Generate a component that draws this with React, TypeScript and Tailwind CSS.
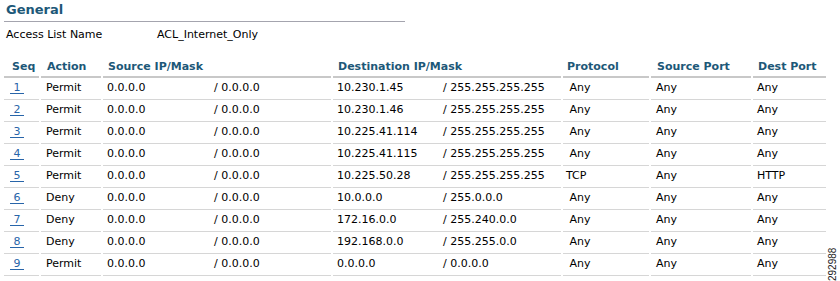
import React from 'react';

const rules = [
  { seq: 1, action: 'Permit', src: '0.0.0.0', srcMask: '0.0.0.0', dst: '10.230.1.45', dstMask: '255.255.255.255', proto: 'Any', srcPort: 'Any', dstPort: 'Any' },
  { seq: 2, action: 'Permit', src: '0.0.0.0', srcMask: '0.0.0.0', dst: '10.230.1.46', dstMask: '255.255.255.255', proto: 'Any', srcPort: 'Any', dstPort: 'Any' },
  { seq: 3, action: 'Permit', src: '0.0.0.0', srcMask: '0.0.0.0', dst: '10.225.41.114', dstMask: '255.255.255.255', proto: 'Any', srcPort: 'Any', dstPort: 'Any' },
  { seq: 4, action: 'Permit', src: '0.0.0.0', srcMask: '0.0.0.0', dst: '10.225.41.115', dstMask: '255.255.255.255', proto: 'Any', srcPort: 'Any', dstPort: 'Any' },
  { seq: 5, action: 'Permit', src: '0.0.0.0', srcMask: '0.0.0.0', dst: '10.225.50.28', dstMask: '255.255.255.255', proto: 'TCP', srcPort: 'Any', dstPort: 'HTTP' },
  { seq: 6, action: 'Deny', src: '0.0.0.0', srcMask: '0.0.0.0', dst: '10.0.0.0', dstMask: '255.0.0.0', proto: 'Any', srcPort: 'Any', dstPort: 'Any' },
  { seq: 7, action: 'Deny', src: '0.0.0.0', srcMask: '0.0.0.0', dst: '172.16.0.0', dstMask: '255.240.0.0', proto: 'Any', srcPort: 'Any', dstPort: 'Any' },
  { seq: 8, action: 'Deny', src: '0.0.0.0', srcMask: '0.0.0.0', dst: '192.168.0.0', dstMask: '255.255.0.0', proto: 'Any', srcPort: 'Any', dstPort: 'Any' },
  { seq: 9, action: 'Permit', src: '0.0.0.0', srcMask: '0.0.0.0', dst: '0.0.0.0', dstMask: '0.0.0.0', proto: 'Any', srcPort: 'Any', dstPort: 'Any' },
];

const headers = [
  { label: 'Seq', pad: 'pl-[8px]' },
  { label: 'Action', pad: 'pl-[6px]' },
  { label: 'Source IP/Mask', pad: 'pl-[5px]' },
  { label: 'Destination IP/Mask', pad: 'pl-[5px]' },
  { label: 'Protocol', pad: 'pl-[4px]' },
  { label: 'Source Port', pad: 'pl-[6px]' },
  { label: 'Dest Port', pad: 'pl-[5px]' },
];

const cell = 'h-[22px] flex items-center border-b border-[#d6d6d6] whitespace-pre';

const App = () => {
  return (
    <div className="relative w-[840px] h-[281px] bg-white text-black text-[11px] font-['DejaVu_Sans','Verdana',sans-serif]">
      <div className="h-[21px] pl-[6px] pt-[1px] text-[13px] font-bold leading-[17px] text-[#1d5878]">General</div>
      <div className="ml-[4px] w-[401px] h-px bg-[#a4a4ae]" />

      <div className="h-[26px] flex items-center">
        <span className="pl-[6px] w-[157px]">Access List Name</span>
        <span>ACL_Internet_Only</span>
      </div>

      <div className="mt-[10px] ml-[4px] grid grid-cols-[35px_60px_228px_228px_86px_100px_73px] gap-x-[2px]">
        {headers.map((h) => (
          <div
            key={h.label}
            className={`h-[20px] flex items-center border-b-2 border-[#c8c8c8] font-bold text-[#1d5878] whitespace-nowrap ${h.pad}`}
          >
            {h.label}
          </div>
        ))}

        {rules.map((r) => (
          <React.Fragment key={r.seq}>
            <div className={`${cell} pl-[6px]`}>
              <a href="#" className="text-[#2865a9] underline underline-offset-2">{`\u00a0${r.seq}\u00a0`}</a>
            </div>
            <div className={`${cell} pl-[5px]`}>{r.action}</div>
            <div className={cell}>
              <span className="w-[107px] pl-[4px]">{r.src}</span>
              <span className="pl-[4px]">/ {r.srcMask}</span>
            </div>
            <div className={cell}>
              <span className="w-[106px] pl-[4px]">{r.dst}</span>
              <span className="pl-[4px]">/ {r.dstMask}</span>
            </div>
            <div className={`${cell} pl-[3px]`}>{r.proto === 'Any' ? '\u00a0Any' : r.proto}</div>
            <div className={`${cell} pl-[5px]`}>{r.srcPort}</div>
            <div className={`${cell} pl-[4px]`}>{r.dstPort}</div>
          </React.Fragment>
        ))}
      </div>

      <div className="absolute left-[828px] top-[242px] h-[39px] text-[10px] leading-[10px] text-[#222] font-['Liberation_Sans',sans-serif] [writing-mode:vertical-rl] rotate-180">
        292988
      </div>
    </div>
  );
};

export default App;
